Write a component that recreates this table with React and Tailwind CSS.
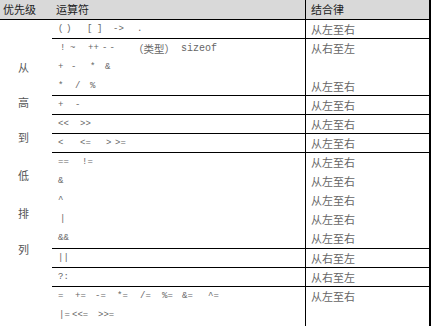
const CJK = "font-['Noto_Sans_CJK_SC','Noto_Sans',sans-serif]";
const MONO = "font-['Liberation_Mono',monospace]";

// each op row: list of [text, widthClass]; last token has no fixed width
const GROUPS = [
  {
    rows: [[['(', 'w-[8px]'], [')', 'w-[21px]'], ['[', 'w-[10px]'], [']', 'w-[16px]'], ['->', 'w-[24px]'], ['.', '']]],
    assoc: ['从左至右'],
    h: 'h-[19px]'
  },
  {
    rows: [
      [['!', 'w-[12px] pl-[2px]'], ['~', 'w-[18px]'], ['++', 'w-[14px]'], ['--', 'w-[31px] tracking-[2px]'], ['（类型）', 'w-[48px] cjk'], ['sizeof', 'text-[10px]']],
      [['+', 'w-[13px]'], ['-', 'w-[19px]'], ['*', 'w-[15px]'], ['&', '']],
      [['*', 'w-[17px]'], ['/', 'w-[15px]'], ['%', '']]
    ],
    assoc: ['从右至左', '', '从左至右'],
    h: 'h-[57px]'
  },
  { rows: [[['+', 'w-[17px]'], ['-', '']]], assoc: ['从左至右'], h: 'h-[19px]' },
  { rows: [[['<<', 'w-[22px]'], ['>>', '']]], assoc: ['从左至右'], h: 'h-[19px]' },
  { rows: [[['<', 'w-[22px]'], ['<=', 'w-[26px]'], ['>', 'w-[9px]'], ['>=', '']]], assoc: ['从左至右'], h: 'h-[19px]' },
  {
    rows: [
      [['==', 'w-[24px]'], ['!=', '']],
      [['&', '']],
      [['^', '']],
      [['|', 'pl-[2px]']],
      [['&&', '']]
    ],
    assoc: ['从左至右', '从左至右', '从左至右', '从左至右', '从左至右'],
    h: 'h-[96px]'
  },
  { rows: [[['||', '']]], assoc: ['从右至左'], h: 'h-[19px]' },
  { rows: [[['?:', '']]], assoc: ['从右至左'], h: 'h-[19px]' },
  {
    rows: [
      [['=', 'w-[17px]'], ['+=', 'w-[20px]'], ['-=', 'w-[22px]'], ['*=', 'w-[23px]'], ['/=', 'w-[22px]'], ['%=', 'w-[20px]'], ['&=', 'w-[26px]'], ['^=', '']],
      [['|=', 'w-[14px] pl-[1px]'], ['<<=', 'w-[26px]'], ['>>=', '']]
    ],
    assoc: ['从左至右', ''],
    h: 'h-[40px]',
    last: true
  }
];

const SIDE = [
  ['从', 'mt-[41px]'],
  ['高', 'mt-[23px]'],
  ['到', 'mt-[23px]'],
  ['低', 'mt-[26px]'],
  ['排', 'mt-[26px]'],
  ['列', 'mt-[24px]']
];

function OpRow({ tokens }) {
  return (
    <div className="h-[19px] flex items-center pl-[6px] whitespace-pre">
      {tokens.map(([t, w], i) => {
        const isCjk = w.includes('cjk');
        const size = w.includes('text-[') ? '' : isCjk ? 'text-[10.5px]' : 'text-[9px]';
        return (
          <span
            key={i}
            className={`inline-block ${w.replace('cjk', '')} ${isCjk ? CJK : MONO} ${size}`}
          >
            {t}
          </span>
        );
      })}
    </div>
  );
}

export default function App() {
  return (
    <div className="w-[431px] h-[326px] overflow-hidden bg-white text-[#666]">
      <div className="w-[431px] border-r-2 border-black">
        <div className={`h-[20px] flex bg-[#d9d9d9] border-b border-black text-[11px] text-[#222] ${CJK}`}>
          <div className="w-[52px] pl-[3px] flex items-center">优先级</div>
          <div className="w-[253px] pl-[4px] flex items-center">运算符</div>
          <div className="flex-1 border-l border-black pl-[5px] flex items-center">结合律</div>
        </div>
        <div className="flex">
          <div className={`w-[52px] shrink-0 flex flex-col pl-[18px] text-[11px] text-[#555] ${CJK}`}>
            {SIDE.map(([c, m]) => (
              <span key={c} className={`h-[12px] leading-[12px] ${m}`}>{c}</span>
            ))}
          </div>
          <div className="flex-1">
            {GROUPS.map((g, gi) => (
              <div key={gi} className={`flex ${g.h} ${g.last ? '' : 'border-b border-black'}`}>
                <div className="w-[253px] text-[#666]">
                  {g.rows.map((r, ri) => <OpRow key={ri} tokens={r} />)}
                </div>
                <div className={`flex-1 border-l border-black pl-[5px] text-[11px] text-[#666] ${CJK}`}>
                  {g.assoc.map((a, ai) => (
                    <div key={ai} className="h-[19px] flex items-center">{a}</div>
                  ))}
                </div>
              </div>
            ))}
          </div>
        </div>
      </div>
    </div>
  );
}
